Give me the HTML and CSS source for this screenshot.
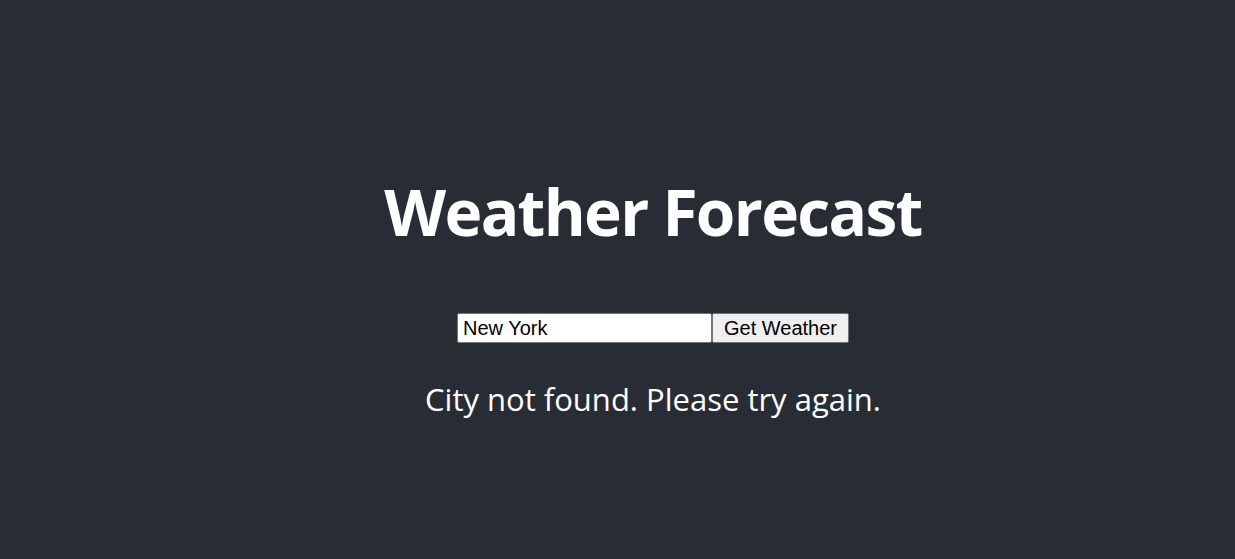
FILE: index.html
```html
<!DOCTYPE html>
<html lang="en">
<head>
<meta charset="utf-8">
<title>Weather Forecast</title>
<link rel="stylesheet" href="styles.css">
</head>
<body>
<div class="app">
  <header class="app-header">
    <h1 class="title">Weather Forecast</h1>
    <form class="search">
      <input class="city-input" type="text" value="New York">
      <button class="get-btn" type="button">Get Weather</button>
    </form>
    <p class="message">City not found. Please try again.</p>
  </header>
</div>
</body>
</html>
```
FILE: styles.css
```css
html, body {
  margin: 0;
  padding: 0;
  background: #282c34;
}
.app {
  text-align: center;
}
.app-header {
  min-height: 559px;
  display: flex;
  flex-direction: column;
  align-items: center;
  justify-content: center;
  padding-left: 71px;
  padding-top: 35px;
  box-sizing: border-box;
  color: #ffffff;
  font-family: "Open Sans", "Noto Sans", sans-serif;
}
.title {
  margin: 0 0 62px 0;
  font-size: 64px;
  font-weight: 700;
  line-height: 1.2;
  letter-spacing: -1.7px;
}
.search {
  display: flex;
  margin: 0;
}
.city-input {
  width: 255px;
  height: 30px;
  box-sizing: border-box;
  border: 1px solid #767676;
  border-radius: 2px;
  padding: 0 5px;
  font-family: "Liberation Sans", Arial, sans-serif;
  font-size: 20px;
  color: #000;
  background: #fff;
}
.get-btn {
  width: 137px;
  height: 30px;
  box-sizing: border-box;
  border: 1px solid #767676;
  border-radius: 2px;
  background: #efefef;
  font-family: "Liberation Sans", Arial, sans-serif;
  font-size: 20px;
  color: #000;
  padding: 0 6px;
}
.message {
  margin: 36px 0 0 0;
  font-size: 31px;
  line-height: 1.3;
}
```
